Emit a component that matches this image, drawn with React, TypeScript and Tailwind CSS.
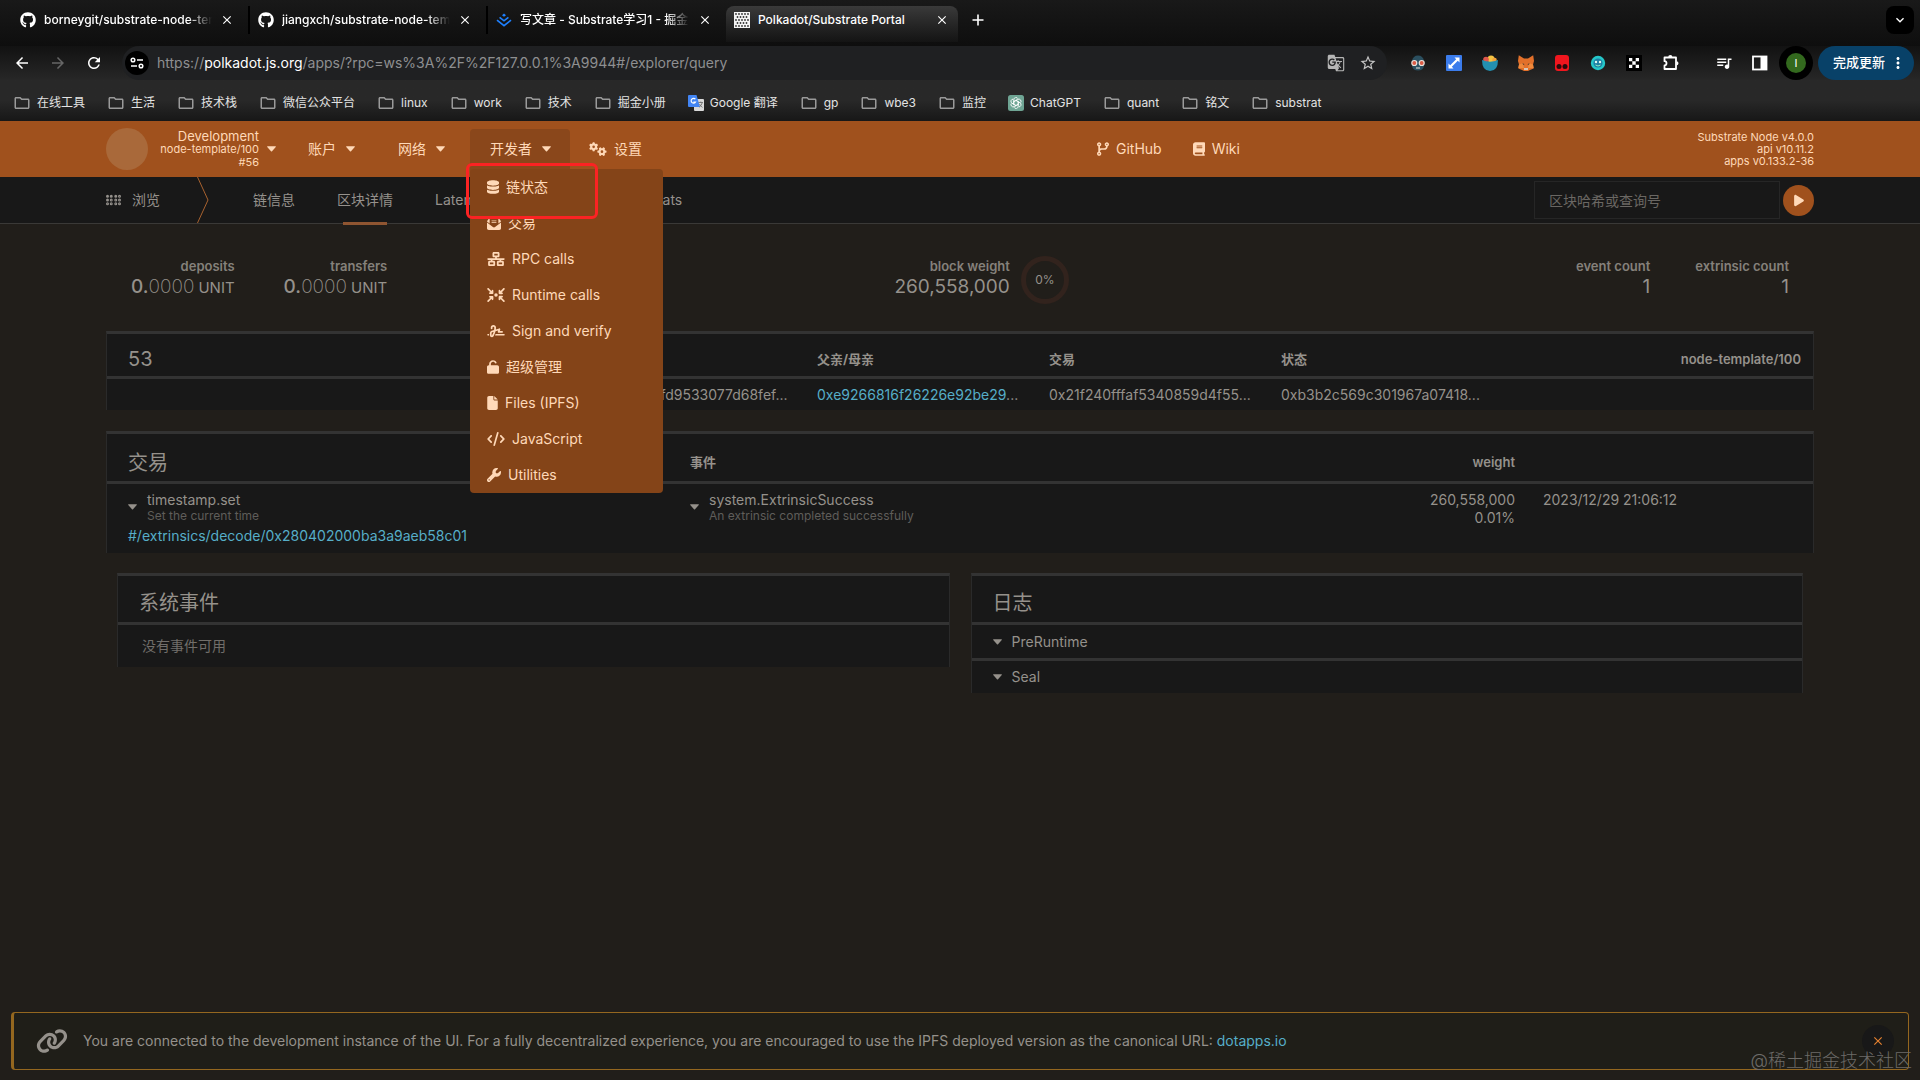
import type { ReactNode } from "react";
import {
  FaArrowsToCircle,
  FaBook,
  FaBraille,
  FaCode,
  FaCodeBranch,
  FaDatabase,
  FaEnvelopeOpenText,
  FaFile,
  FaGears,
  FaGithub,
  FaLink,
  FaNetworkWired,
  FaPlay,
  FaSignature,
  FaUnlock,
  FaWrench,
} from "react-icons/fa6";
import {
  MdArrowBack,
  MdArrowForward,
  MdClose,
  MdGTranslate,
  MdKeyboardArrowDown,
  MdMoreVert,
  MdOutlineFolder,
  MdQueueMusic,
  MdRefresh,
  MdStarBorder,
} from "react-icons/md";

function Caret() {
  return (
    <svg viewBox="0 0 10 6" className="h-[6px] w-[9px] shrink-0 fill-current" aria-hidden="true">
      <path d="M0.6 0h8.8q.8.2.3.9L5.6 5.6q-.6.5-1.2 0L.3.9Q-.2.2.6 0z" />
    </svg>
  );
}

function JuejinIcon() {
  return (
    <svg viewBox="0 0 16 16" className="h-4 w-4 shrink-0" fill="none" aria-hidden="true">
      <path d="M8 1.6l2 1.6-2 1.6-2-1.6z" fill="#1e80ff" />
      <path d="M3.6 5.4L8 8.8l4.4-3.4" stroke="#1e80ff" strokeWidth="1.7" />
      <path d="M1 8.2l7 5.4 7-5.4" stroke="#1e80ff" strokeWidth="1.7" />
    </svg>
  );
}

function PolkadotIcon() {
  const rows = [2, 5, 8, 11, 14];
  return (
    <svg viewBox="0 0 16 16" className="h-4 w-4 shrink-0" aria-hidden="true">
      <rect width="16" height="16" fill="#f4f4f4" />
      {rows.map((y, i) =>
        (i % 2 ? [3.5, 6.5, 9.5, 12.5] : [2, 5, 8, 11, 14]).map((x) => (
          <circle key={`${x}-${y}`} cx={x} cy={y} r="0.9" fill="#333" />
        )),
      )}
    </svg>
  );
}

function GoogleTranslateIcon() {
  return (
    <svg viewBox="0 0 16 16" className="h-4 w-4 shrink-0" aria-hidden="true">
      <rect x="6" y="4" width="10" height="12" rx="1" fill="#d9d9d9" />
      <path d="M1 0h7.5l3.5 12H1q-1 0-1-1V1q0-1 1-1z" fill="#4285f4" />
      <path d="M7.4 4.2A2.4 2.4 0 107.6 7H5.4" stroke="#fff" strokeWidth="1.1" fill="none" />
      <path d="M10.5 7.5h4.5M12.8 6.5v1M14.2 7.8q-.8 3-3 4.4M11.5 9q.9 2.2 3 3.4" stroke="#666" strokeWidth=".8" fill="none" />
    </svg>
  );
}

function ChatGptIcon() {
  return (
    <svg viewBox="0 0 16 16" className="h-4 w-4 shrink-0" aria-hidden="true">
      <rect width="16" height="16" rx="2.5" fill="#6fa594" />
      <g fill="none" stroke="#fff" strokeWidth=".8">
        {[0, 60, 120, 180, 240, 300].map((angle) => (
          <path
            key={angle}
            d="M5.800 6.700V4.600a2.200 2.200 0 014.200-.8M5.800 6.700L8 5.400l3.200 1.900"
            transform={`rotate(${angle} 8 8)`}
          />
        ))}
      </g>
    </svg>
  );
}

function PuzzleIcon() {
  return (
    <svg viewBox="0 0 18 18" className="h-[18px] w-[18px]" aria-hidden="true">
      <path
        d="M2.500 3.500h11.500v11.500H2.500v-3.600q2 0 2-2.100t-2-2.100z"
        fill="none"
        stroke="#fff"
        strokeWidth="1.800"
        strokeLinejoin="round"
      />
      <path d="M6.200 3.200a2.100 2.100 0 014.200 0zM14.400 7.200a2.100 2.100 0 010 4.200z" fill="#fff" />
    </svg>
  );
}

const tabs = [
  { title: "borneygit/substrate-node-template", icon: <FaGithub className="h-4 w-4 shrink-0" /> },
  { title: "jiangxch/substrate-node-template", icon: <FaGithub className="h-4 w-4 shrink-0" /> },
  { title: "写文章 - Substrate学习1 - 掘金", icon: <JuejinIcon /> },
  { title: "Polkadot/Substrate Portal", icon: <PolkadotIcon />, active: true },
];

const folder = <MdOutlineFolder className="h-[18px] w-[18px] shrink-0 text-[#9a9a9a]" />;

const bookmarks: { label: string; icon?: ReactNode }[] = [
  { label: "在线工具" },
  { label: "生活" },
  { label: "技术栈" },
  { label: "微信公众平台" },
  { label: "linux" },
  { label: "work" },
  { label: "技术" },
  { label: "掘金小册" },
  { label: "Google 翻译", icon: <GoogleTranslateIcon /> },
  { label: "gp" },
  { label: "wbe3" },
  { label: "监控" },
  { label: "ChatGPT", icon: <ChatGptIcon /> },
  { label: "quant" },
  { label: "铭文" },
  { label: "substrat" },
];

const extensions: { name: string; icon: ReactNode }[] = [
  {
    name: "Reader",
    icon: (
      <svg viewBox="0 0 16 16" className="h-4 w-4">
        <path d="M2 6Q3 .5 8 .5T14 6v5q-1 4.500-6 4.500T2 11z" fill="#2b4f5f" />
        <path d="M5 11h6v4H5z" fill="#2b5263" />
        <circle cx="4.300" cy="8" r="3.100" fill="#e9e2dc" />
        <circle cx="11.700" cy="8" r="3.100" fill="#e9e2dc" />
        <circle cx="4.300" cy="8" r="1.900" fill="#dc5b45" />
        <circle cx="11.700" cy="8" r="1.900" fill="#dc5b45" />
        <path d="M6 13h4" stroke="#e9e2dc" />
      </svg>
    ),
  },
  {
    name: "Resize",
    icon: (
      <svg viewBox="0 0 16 16" className="h-4 w-4">
        <rect width="16" height="16" rx="1" fill="#3b7cec" />
        <path d="M8.500 2.500h5v5l-1.700-1.700-6 6 1.700 1.700h-5v-5l1.700 1.700 6-6z" fill="#fff" />
      </svg>
    ),
  },
  {
    name: "Bowl",
    icon: (
      <svg viewBox="0 0 16 16" className="h-4 w-4">
        <circle cx="9" cy="4" r="3.600" fill="#f5c443" />
        <circle cx="4" cy="4.500" r="2.800" fill="#e0574c" />
        <circle cx="12.500" cy="5" r="2.300" fill="#f3a33c" />
        <path d="M0 5q8 3.500 16 0 0 11-8 11T0 5z" fill="#2390b0" />
      </svg>
    ),
  },
  {
    name: "MetaMask",
    icon: (
      <svg viewBox="0 0 16 16" className="h-4 w-4">
        <path d="M.8.300L6 3.500h4L15.200.300 16 6l-1 3.500.7 4-3.700 1.500-2 1H6l-2-1-3.700-1.500L1 9.500 0 6z" fill="#e2702a" />
        <path d="M1 9.500L5 8l1 5-5.700 0zM15 9.500L11 8l-1 5h5.700z" fill="#f08a3c" />
        <path d="M4 8.500l2 .3.300 1.500zM12 8.500l-2 .3-.3 1.500z" fill="#3b3230" />
        <path d="M6 13h4v2H6z" fill="#d8c5b5" />
      </svg>
    ),
  },
  {
    name: "Tampermonkey",
    icon: (
      <svg viewBox="0 0 16 16" className="h-4 w-4">
        <rect x="1" width="14" height="16" rx="3" fill="#f0161e" />
        <circle cx="5" cy="11.500" r="2.500" fill="#2a0a0c" />
        <circle cx="11" cy="11.500" r="2.500" fill="#2a0a0c" />
      </svg>
    ),
  },
  {
    name: "Face",
    icon: (
      <svg viewBox="0 0 16 16" className="h-4 w-4">
        <circle cx="8" cy="8" r="7.200" fill="#25c7c9" />
        <circle cx="8" cy="8" r="4.600" fill="#1f7fa5" />
        <circle cx="6" cy="7" r="1.200" fill="#dffcf0" />
        <circle cx="10" cy="7" r="1.200" fill="#dffcf0" />
        <path d="M5.500 10q2.500 2 5 0" stroke="#8df0c0" fill="none" />
      </svg>
    ),
  },
  {
    name: "OKX",
    icon: (
      <svg viewBox="0 0 16 16" className="h-4 w-4">
        <rect width="16" height="16" fill="#000" />
        <path d="M3 3h3.300v3.300H3zM9.700 3H13v3.300H9.700zM6.300 6.300h3.400v3.400H6.300zM3 9.700h3.300V13H3zM9.700 9.700H13V13H9.700z" fill="#fff" />
      </svg>
    ),
  },
];

const menuItems = [
  { label: "链状态", Icon: FaDatabase, size: "h-[14px] w-3" },
  { label: "交易", Icon: FaEnvelopeOpenText, size: "h-[14px] w-[14px]" },
  { label: "RPC calls", Icon: FaNetworkWired, size: "h-[14px] w-[18px]" },
  { label: "Runtime calls", Icon: FaArrowsToCircle, size: "h-[14px] w-[18px]" },
  { label: "Sign and verify", Icon: FaSignature, size: "h-[14px] w-[18px]" },
  { label: "超级管理", Icon: FaUnlock, size: "h-[14px] w-3" },
  { label: "Files (IPFS)", Icon: FaFile, size: "h-[14px] w-[11px]" },
  { label: "JavaScript", Icon: FaCode, size: "h-[14px] w-[18px]" },
  { label: "Utilities", Icon: FaWrench, size: "h-[14px] w-[14px]" },
];

function TabStrip() {
  return (
    <div className="flex h-[46px] items-start bg-gradient-to-b from-[#191919] to-[#0e0e0e] pt-[6px] pr-[6px] pl-3">
      {tabs.map((tab, index) => (
        <div
          key={tab.title}
          className={`flex items-center gap-2 pl-2 ${
            tab.active
              ? "h-9 w-[232px] rounded-t-lg bg-gradient-to-b from-[#3a3a3a] to-[#141414] pr-[9px] pb-2"
              : "h-7 w-[238px] pr-[14px]"
          } ${index < 2 ? "border-r-2 border-black" : ""}`}
        >
          {tab.icon}
          <span
            className={`min-w-0 flex-1 overflow-hidden text-xs font-medium whitespace-nowrap ${
              tab.active ? "" : "[mask-image:linear-gradient(to_right,#000_86%,transparent)]"
            }`}
          >
            {tab.title}
          </span>
          <button type="button" aria-label="Close tab">
            <MdClose className="h-[14px] w-[14px]" />
          </button>
        </div>
      ))}
      <button type="button" aria-label="New tab" className="ml-[6px] flex h-7 w-7 items-center justify-center">
        <svg viewBox="0 0 12 12" className="h-3 w-3 stroke-white" aria-hidden="true">
          <path d="M6 .5v11M.5 6h11" strokeWidth="1.600" />
        </svg>
      </button>
      <button
        type="button"
        aria-label="Search tabs"
        className="ml-auto flex h-7 w-7 items-center justify-center rounded-lg bg-black"
      >
        <MdKeyboardArrowDown className="h-4 w-4" />
      </button>
    </div>
  );
}

function Toolbar() {
  return (
    <div className="flex h-[34px] items-center bg-gradient-to-b from-[#121212] to-[#272727] pr-[6px] pl-[13px]">
      <div className="flex w-[109px] items-center gap-[18px]">
        <button type="button" aria-label="Back">
          <MdArrowBack className="h-[18px] w-[18px]" />
        </button>
        <button type="button" aria-label="Forward" className="text-[#666]">
          <MdArrowForward className="h-[18px] w-[18px]" />
        </button>
        <button type="button" aria-label="Reload">
          <MdRefresh className="h-[18px] w-[18px]" />
        </button>
      </div>
      <div className="flex h-full flex-1 items-center rounded-full bg-[#1f2022] pr-[10px] pl-[3px]">
        <button
          type="button"
          aria-label="Site information"
          className="flex h-6 w-6 items-center justify-center rounded-full bg-black"
        >
          <svg viewBox="0 0 14 12" className="h-3 w-[14px]" fill="none" stroke="#fff" strokeWidth="1.500" aria-hidden="true">
            <circle cx="3" cy="3" r="1.800" />
            <path d="M7 3h6M1 9h6" />
            <circle cx="11" cy="9" r="1.800" />
          </svg>
        </button>
        <p className="ml-2 flex-1 text-sm text-[#8e8f91]">
          https://<span className="text-white">polkadot.js.org</span>
          /apps/?rpc=ws%3A%2F%2F127.0.0.1%3A9944#/explorer/query
        </p>
        <button type="button" aria-label="Translate" className="text-[#b5b5b5]">
          <MdGTranslate className="h-[18px] w-[18px]" />
        </button>
        <button type="button" aria-label="Bookmark" className="ml-[14px] text-[#c4c4c4]">
          <MdStarBorder className="h-[18px] w-[18px]" />
        </button>
      </div>
      <div className="ml-[23px] flex items-center gap-5">
        {extensions.map((extension) => (
          <button key={extension.name} type="button" aria-label={extension.name}>
            {extension.icon}
          </button>
        ))}
        <button type="button" aria-label="Extensions">
          <PuzzleIcon />
        </button>
      </div>
      <div className="ml-[35px] flex items-center gap-[18px]">
        <button type="button" aria-label="Media">
          <MdQueueMusic className="h-[18px] w-[18px]" />
        </button>
        <button type="button" aria-label="Side panel">
          <svg viewBox="0 0 18 18" className="h-[18px] w-[18px]" aria-hidden="true">
            <rect x="2" y="2.500" width="13.500" height="13" fill="none" stroke="#fff" strokeWidth="1.800" />
            <path d="M9.500 2.500h6v13h-6z" fill="#fff" />
          </svg>
        </button>
      </div>
      <button
        type="button"
        aria-label="Profile"
        className="ml-[10px] flex h-[34px] w-[34px] items-center justify-center rounded-full bg-black"
      >
        <span className="flex h-5 w-5 items-center justify-center rounded-full bg-[#33691e] text-[11px]">I</span>
      </button>
      <button
        type="button"
        className="ml-[5px] flex h-[34px] w-24 items-center justify-center gap-1 rounded-full bg-[#084168] pl-2 text-[13px] font-medium"
      >
        完成更新
        <MdMoreVert className="h-[18px] w-[18px]" />
      </button>
    </div>
  );
}

function BookmarksBar() {
  return (
    <nav className="flex h-[41px] items-center gap-[22px] bg-gradient-to-b from-[#282828] via-[#282828] to-[#171717] px-[13px] pt-1 text-xs text-[#e3e3e3]">
      {bookmarks.map((bookmark) => (
        <a key={bookmark.label} href="#" className="flex items-center gap-[6px] whitespace-nowrap">
          {bookmark.icon ?? folder}
          {bookmark.label}
        </a>
      ))}
    </nav>
  );
}

function DeveloperMenu() {
  return (
    <div className="relative ml-[22px] w-[100px] self-stretch pt-2">
      <button
        type="button"
        aria-expanded="true"
        className="flex h-12 w-full items-center gap-[10px] rounded-t bg-[#8a471b] pb-2 pl-5"
      >
        开发者
        <Caret />
      </button>
      <ul className="absolute top-12 left-0 z-10 w-[193px] rounded bg-[#844418]">
        {menuItems.map(({ label, Icon, size }) => (
          <li key={label}>
            <a href="#" className="flex h-9 items-center gap-[7px] pl-[17px]">
              <Icon className={size} />
              {label}
            </a>
          </li>
        ))}
      </ul>
      <div className="pointer-events-none absolute top-[42px] -left-1 z-20 h-14 w-[132px] rounded-md border-[3px] border-[#fb2323]" />
    </div>
  );
}

function Header() {
  return (
    <header className="flex h-14 items-center bg-[#a0511d] px-[106px] text-sm text-[#ffd9b8]">
      <div className="h-[42px] w-[42px] rounded-full bg-[#a9693a]" />
      <button type="button" className="flex w-32 items-center justify-end gap-2 text-right text-xs leading-[13px]">
        <span>
          <span className="block text-[13px] leading-[14px]">Development</span>
          <span className="block text-[11px]">node-template/100</span>
          <span className="block text-[11px]">#56</span>
        </span>
        <Caret />
      </button>
      <button type="button" className="ml-6 flex w-[98px] items-center gap-[10px] pl-2">
        账户
        <Caret />
      </button>
      <button type="button" className="flex w-[50px] items-center gap-[10px] whitespace-nowrap">
        网络
        <Caret />
      </button>
      <DeveloperMenu />
      <a href="#" className="ml-[19px] flex items-center gap-[7px]">
        <FaGears className="h-[14px] w-[18px]" />
        设置
      </a>
      <div className="ml-[455px] flex items-center gap-[31px]">
        <a href="#" className="flex items-center gap-[7px]">
          <FaCodeBranch className="h-[14px] w-3" />
          GitHub
        </a>
        <a href="#" className="flex items-center gap-[7px]">
          <FaBook className="h-[14px] w-3" />
          Wiki
        </a>
      </div>
      <div className="ml-auto text-right text-[11px] leading-3">
        <div>Substrate Node v4.0.0</div>
        <div>api v10.11.2</div>
        <div>apps v0.133.2-36</div>
      </div>
    </header>
  );
}

function SubNav() {
  return (
    <nav className="flex h-[47px] items-center border-b border-[#3a3937] bg-[#181818] px-[106px] text-sm text-[#95918c]">
      <a href="#" className="flex w-[91px] items-center gap-[11px]">
        <FaBraille className="h-3 w-[15px]" />
        浏览
      </a>
      <svg viewBox="0 0 12 46" className="h-[46px] w-3" fill="none" stroke="#a8622f" aria-hidden="true">
        <path d="M.5 0L11 23 .5 46" />
      </svg>
      <div className="ml-11 flex h-[47px] items-center gap-[42px]">
        <a href="#">链信息</a>
        <a href="#" className="relative flex h-full items-center">
          区块详情
          <span className="absolute inset-x-[6px] -bottom-px h-[3px] bg-[#8f5531]" />
        </a>
        <a href="#">Latency</a>
        <a href="#" className="w-[153px] text-right">Validator stats</a>
      </div>
      <form className="ml-auto flex items-center gap-[3px]">
        <input
          aria-label="区块哈希或查询号"
          placeholder="区块哈希或查询号"
          className="h-[38px] w-[246px] border border-[#262626] bg-[#181818] px-[14px] placeholder:text-[#6a6763]"
        />
        <button
          type="button"
          aria-label="查询"
          className="flex h-[31px] w-[31px] items-center justify-center rounded-full bg-[#a0511d] text-[#ffd9b8]"
        >
          <FaPlay className="h-[13px] w-3" />
        </button>
      </form>
    </nav>
  );
}

function Stat({ label, children }: { label: string; children: ReactNode }) {
  return (
    <div className="text-right">
      <div className="text-[13px] leading-5 font-semibold text-[#85817b]">{label}</div>
      <div className="text-[19px] leading-[22px] text-[#95918b]">{children}</div>
    </div>
  );
}

function Balance() {
  return (
    <>
      <span className="font-medium">0.</span>
      <span className="font-extralight">0000</span>
      <span className="ml-1 text-[15px]">UNIT</span>
    </>
  );
}

function Summary() {
  return (
    <section className="flex justify-between px-[25px] pt-8">
      <div className="flex gap-[49px]">
        <Stat label="deposits">
          <Balance />
        </Stat>
        <Stat label="transfers">
          <Balance />
        </Stat>
      </div>
      <div className="flex gap-[11px]">
        <Stat label="block weight">260,558,000</Stat>
        <div className="flex h-12 w-12 items-center justify-center rounded-full border-[5px] border-[#32231d] text-xs text-[#95918b]">
          0%
        </div>
      </div>
      <div className="flex gap-[45px]">
        <Stat label="event count">1</Stat>
        <Stat label="extrinsic count">1</Stat>
      </div>
    </section>
  );
}

const tableClass =
  "w-full table-fixed border-separate border-spacing-0 border-x border-t-[3px] border-x-[#2a2a2a] border-t-[#333] bg-[#181818] text-left text-sm";

function BlockTable() {
  return (
    <table className={`mt-[27px] ${tableClass}`}>
      <thead>
        <tr className="h-[45px] text-[13px] [&>th]:border-b-[3px] [&>th]:border-[#333] [&>th]:px-3 [&>th]:pt-2">
          <th className="text-xl leading-6 font-normal">
            <span className="pl-[9px]">53</span>
          </th>
          <th className="w-[232px]">哈希</th>
          <th className="w-[232px]">父亲/母亲</th>
          <th className="w-[232px]">交易</th>
          <th className="w-[232px]">状态</th>
          <th className="w-[312px] text-right font-semibold">node-template/100</th>
        </tr>
      </thead>
      <tbody>
        <tr className="h-[31px] whitespace-nowrap [&>td]:px-3">
          <td />
          <td>0x8c48e2afd9533077d68fef...</td>
          <td>
            <a href="#" className="text-[#56aec8]">0xe9266816f26226e92be29</a>...
          </td>
          <td>0x21f240fffaf5340859d4f55...</td>
          <td>0xb3b2c569c301967a07418...</td>
          <td />
        </tr>
      </tbody>
    </table>
  );
}

function CallInfo({ name, detail }: { name: string; detail: string }) {
  return (
    <div className="flex items-center gap-[10px]">
      <Caret />
      <div>
        <div className="leading-[18px]">{name}</div>
        <div className="text-xs leading-[14px] text-[#5f5d5a]">{detail}</div>
      </div>
    </div>
  );
}

function ExtrinsicsTable() {
  return (
    <table className={`mt-[21px] ${tableClass}`}>
      <thead>
        <tr className="h-[50px] text-[13px] [&>th]:border-b-[3px] [&>th]:border-[#333] [&>th]:px-3 [&>th]:pt-[10px]">
          <th className="w-[571px] text-xl leading-6 font-normal">
            <span className="pl-[9px]">交易</span>
          </th>
          <th>事件</th>
          <th className="w-40 text-right font-semibold">weight</th>
          <th className="w-[286px]" />
        </tr>
      </thead>
      <tbody>
        <tr className="h-[69px] align-top [&>td]:px-3 [&>td]:pt-[7px]">
          <td>
            <div className="pl-[9px]">
              <CallInfo name="timestamp.set" detail="Set the current time" />
              <a href="#" className="block pt-1 leading-[18px] text-[#56aec8]">
                #/extrinsics/decode/0x280402000ba3a9aeb58c01
              </a>
            </div>
          </td>
          <td>
            <CallInfo name="system.ExtrinsicSuccess" detail="An extrinsic completed successfully" />
          </td>
          <td className="text-right leading-[18px]">
            260,558,000
            <br />
            0.01%
          </td>
          <td className="leading-[18px]">
            <span className="pl-1">2023/12/29 21:06:12</span>
          </td>
        </tr>
      </tbody>
    </table>
  );
}

function Card({ title, children }: { title: string; children: ReactNode }) {
  return (
    <section className="border-x border-t-[3px] border-x-[#2a2a2a] border-t-[#333] bg-[#181818]">
      <h2 className="flex h-[49px] items-center border-b-[3px] border-[#333] px-[21px] pt-2 text-xl">{title}</h2>
      {children}
    </section>
  );
}

function Banner() {
  return (
    <footer className="relative mx-[11px] mt-auto mb-[10px] flex h-[58px] items-center rounded-sm border border-l-[3px] border-[#94671f] bg-[#1f1e18] pr-[14px] pl-[22px] text-sm text-[#95918b]">
      <FaLink className="h-[26px] w-8" />
      <p className="ml-[15px] flex-1">
        You are connected to the development instance of the UI. For a fully decentralized experience, you are
        encouraged to use the IPFS deployed version as the canonical URL:{" "}
        <a href="#" className="text-[#56aec8]">dotapps.io</a>
      </p>
      <button
        type="button"
        aria-label="Close"
        className="flex h-8 w-8 items-center justify-center rounded-full bg-[#181818] text-[#e5812f]"
      >
        <MdClose className="h-[14px] w-[14px]" />
      </button>
      <span className="absolute -right-1 -bottom-1 text-lg leading-6 font-light whitespace-nowrap text-[#6d6b68]">
        @稀土掘金技术社区
      </span>
    </footer>
  );
}

export default function App() {
  return (
    <div className="flex min-h-screen flex-col bg-[#211e1a] font-['Inter','Noto_Sans_CJK_SC',sans-serif] text-[#95918b]">
      <div className="text-white">
        <TabStrip />
        <Toolbar />
        <BookmarksBar />
      </div>
      <Header />
      <SubNav />
      <main className="mx-[106px] mb-8">
        <Summary />
        <BlockTable />
        <ExtrinsicsTable />
        <div className="mx-[11px] mt-5 grid grid-cols-2 items-start gap-[21px]">
          <Card title="系统事件">
            <p className="flex h-[42px] items-center px-6 text-sm text-[#716e6a]">没有事件可用</p>
          </Card>
          <Card title="日志">
            <div className="flex h-9 items-center gap-[10px] border-b-[3px] border-[#333] px-[21px] text-sm">
              <Caret />
              PreRuntime
            </div>
            <div className="flex h-8 items-center gap-[10px] px-[21px] text-sm">
              <Caret />
              Seal
            </div>
          </Card>
        </div>
      </main>
      <Banner />
    </div>
  );
}
